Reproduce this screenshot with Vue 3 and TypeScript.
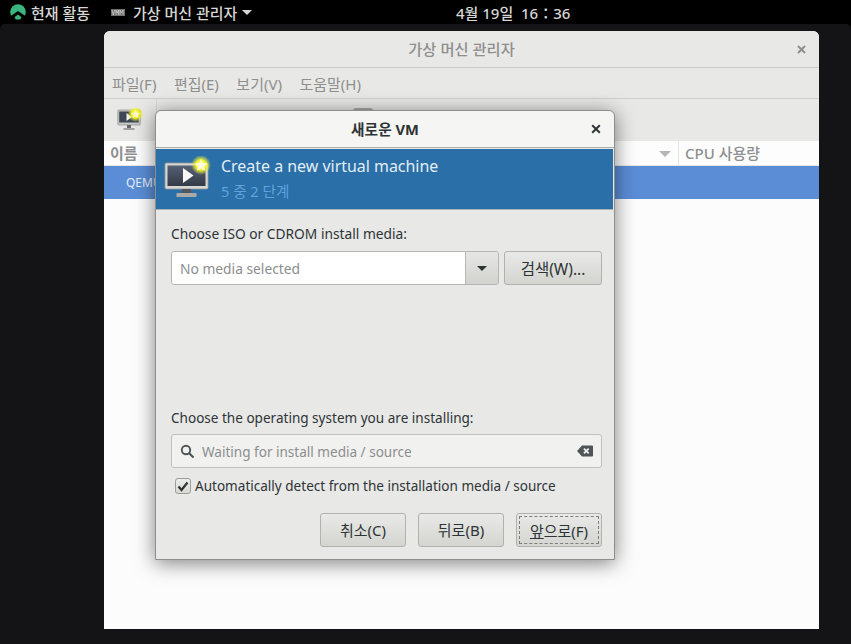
<script setup lang="ts">
const menus = ['파일(F)', '편집(E)', '보기(V)', '도움말(H)']
</script>

<template>
  <div class="desktop">
    <header class="topbar">
      <div class="activities">
        <svg class="logo" width="16" height="16" viewBox="0 0 16 16">
          <circle cx="8" cy="8" r="7.8" fill="#3bb57f" />
          <path d="M0 12.500 8 7l8 5.500V16H0z" fill="#000" />
          <path d="M4.500 13.200 8 10.400l3.500 2.800-1.300 2.300H5.800z" fill="#3bb57f" />
        </svg>
        <span>현재 활동</span>
      </div>
      <div class="appmenu">
        <svg class="vmm" width="14" height="7" viewBox="0 0 14 7">
          <rect width="14" height="7" fill="#6f6f6b" />
          <path d="M1 1l1.300 5L3.600 1M5 6V1l1.200 3L7.500 1v5M9 6V1l1.400 3L12 1v5" stroke="#cfcfcb" stroke-width="0.8" fill="none" />
        </svg>
        <span>가상 머신 관리자</span>
        <i class="caret"></i>
      </div>
      <div class="clock">4월 19일&nbsp; 16：36</div>
    </header>

    <main class="workspace">
      <section class="manager">
        <div class="mgr-title">
          <span>가상 머신 관리자</span>
          <svg class="mgr-close" width="9" height="9" viewBox="0 0 9 9">
            <path d="M1 1l7 7M8 1 1 8" stroke="#8e8e8c" stroke-width="2" />
          </svg>
        </div>
        <nav class="mgr-menu">
          <span v-for="m in menus" :key="m">{{ m }}</span>
        </nav>
        <div class="mgr-tools">
          <div class="tool-btn">
            <svg width="26" height="24" viewBox="0 0 26 24">
              <defs>
                <radialGradient id="glow-small">
                  <stop offset="0.5" stop-color="#f4f424" />
                  <stop offset="1" stop-color="#e8ee3e" stop-opacity="0" />
                </radialGradient>
              </defs>
              <rect x="0.800" y="2" width="22.500" height="15" rx="1" fill="#c9c9c6" stroke="#8c8c8a" stroke-width="0.7" />
              <rect x="2.200" y="3.500" width="19.500" height="11" fill="#3f4654" />
              <path d="M9.500 5v8l5.500-4z" fill="#f3f3f3" />
              <rect x="10" y="17" width="4" height="3" fill="#666" />
              <rect x="6.500" y="20" width="11" height="2" fill="#a2a29f" />
              <circle cx="18.500" cy="6" r="8" fill="url(#glow-small)" />
              <path d="M18.500 1.800l1.300 2.800 3 .4-2.200 2 .6 3-2.700-1.500-2.700 1.500.6-3-2.200-2 3-.4z" fill="#fbf8d2" />
            </svg>
          </div>
          <div class="tool-peek"></div>
        </div>
        <div class="mgr-head">
          <span class="col-name">이름</span>
          <svg class="sort" width="12" height="6" viewBox="0 0 12 6"><path d="M0 0h12L6 6z" fill="#b6b6b6" /></svg>
          <span class="col-cpu">CPU 사용량</span>
        </div>
        <div class="mgr-row">QEMU/KVM</div>
      </section>

      <section class="dialog">
        <div class="dlg-title">
          <span>새로운 VM</span>
          <svg class="dlg-close" width="10" height="10" viewBox="0 0 10 10">
            <path d="M1.200 1.200l7.600 7.600M8.800 1.200 1.200 8.800" stroke="#2e3436" stroke-width="2" />
          </svg>
        </div>
        <div class="banner">
          <svg class="banner-icon" width="48" height="42" viewBox="0 0 48 42">
            <defs>
              <radialGradient id="glow-big">
                <stop offset="0.5" stop-color="#f4f428" />
                <stop offset="1" stop-color="#e8ee3e" stop-opacity="0" />
              </radialGradient>
              <linearGradient id="screen" x1="0" y1="0" x2="0" y2="1">
                <stop offset="0" stop-color="#566074" />
                <stop offset="1" stop-color="#333a47" />
              </linearGradient>
            </defs>
            <rect x="1" y="7" width="43" height="26" rx="1.500" fill="#d6d6d3" stroke="#9a9a97" stroke-width="0.8" />
            <rect x="3.500" y="9.500" width="38" height="20.500" fill="url(#screen)" />
            <path d="M19 12v15l10.500-7.500z" fill="#f8f8f8" />
            <rect x="18" y="33" width="9" height="4" fill="#55565a" />
            <rect x="12.500" y="37" width="20" height="4" rx="0.500" fill="#a9a9a6" />
            <circle cx="37" cy="9" r="10" fill="url(#glow-big)" />
            <path d="M37 2.800l1.900 4 4.500.600-3.300 3 .9 4.400-4-2.200-4 2.200.9-4.400-3.300-3 4.500-.600z" fill="#fdfbd8" />
          </svg>
          <div class="banner-text">
            <div class="banner-title">Create a new virtual machine</div>
            <div class="banner-sub">5 중 2 단계</div>
          </div>
        </div>

        <div class="dlg-body">
          <div class="media">
            <label class="field-label">Choose ISO or CDROM install media:</label>
            <div class="media-row">
              <div class="combo">
                <div class="combo-input">No media selected</div>
                <div class="combo-btn"><i class="combo-caret"></i></div>
              </div>
              <button class="btn browse">검색(W)...</button>
            </div>
          </div>

          <div class="os">
            <label class="field-label">Choose the operating system you are installing:</label>
            <div class="search">
              <svg width="15" height="15" viewBox="0 0 15 15">
                <circle cx="6" cy="6" r="4.200" fill="none" stroke="#4f5557" stroke-width="1.900" />
                <path d="M9.200 9.200 13.500 13.500" stroke="#4f5557" stroke-width="2.200" />
              </svg>
              <span class="search-text">Waiting for install media / source</span>
              <svg class="clear" width="16" height="12" viewBox="0 0 16 12">
                <path fill-rule="evenodd" fill="#4f5557" d="M5 0.500h10a1 1 0 0 1 1 1v9a1 1 0 0 1-1 1H5L0 6zM7.500 3 6.300 4.200 8.100 6 6.300 7.800 7.500 9l1.800-1.800L11.100 9l1.200-1.200L10.500 6l1.800-1.800L11.100 3 9.300 4.800z" />
              </svg>
            </div>
            <div class="auto">
              <span class="check">
                <svg width="12" height="11" viewBox="0 0 12 11"><path d="M1.500 5.500 4.500 9 10.500 1.500" fill="none" stroke="#2e3436" stroke-width="2.200" /></svg>
              </span>
              <span>Automatically detect from the installation media / source</span>
            </div>
          </div>

          <div class="actions">
            <button class="btn action">취소(C)</button>
            <button class="btn action">뒤로(B)</button>
            <button class="btn action focused"><span class="focus-ring"><u>앞</u>으로(F)</span></button>
          </div>
        </div>
      </section>
    </main>
  </div>
</template>

<style>
html, body {
  margin: 0;
  background: #000;
}
</style>

<style scoped>
.desktop {
  display: flex;
  flex-direction: column;
  width: 851px;
  height: 644px;
  overflow: hidden;
  background: #000;
  font-family: "Noto Sans", "Noto Sans CJK KR", sans-serif;
  font-size: 13.55px;
  color: #2e3436;
}

.topbar {
  display: grid;
  flex: none;
  grid-template-columns: 111px 345px 1fr;
  align-items: center;
  height: 24px;
  color: #d6d6d4;
  font-weight: 500;
  font-size: 15px;
  white-space: nowrap;
}
.activities {
  display: flex;
  align-items: center;
  gap: 5px;
  padding-left: 10px;
}
.appmenu {
  display: flex;
  align-items: center;
}
.vmm {
  margin-right: 8px;
}
.caret {
  width: 0;
  height: 0;
  margin-left: 5px;
  border-left: 5px solid transparent;
  border-right: 5px solid transparent;
  border-top: 5px solid #d6d6d4;
}

.workspace {
  position: relative;
  flex: 1;
  border-radius: 5px 5px 0 0;
  background: #141416;
}

.manager {
  position: absolute;
  left: 104px;
  top: 7px;
  width: 715px;
  height: 598px;
  border-radius: 6px 6px 0 0;
  background: #fcfcfc;
  overflow: hidden;
  color: #8f9091;
}
.mgr-title {
  position: relative;
  display: flex;
  align-items: center;
  justify-content: center;
  box-sizing: border-box;
  height: 37px;
  padding-bottom: 2px;
  background: #e8e8e7;
  border-bottom: 1px solid #c8c8c5;
  font-weight: 500;
  font-size: 15.3px;
  color: #8f8f8d;
}
.mgr-close {
  position: absolute;
  right: 13px;
  top: 14px;
}
.mgr-menu {
  display: flex;
  gap: 17.5px;
  align-items: center;
  height: 30px;
  padding-left: 8px;
  background: #e8e8e7;
  border-bottom: 1px solid #d0d0cd;
  font-size: 15px;
  color: #8f8f8d;
}
.mgr-tools {
  display: flex;
  height: 42px;
  background: #e8e8e7;
}
.tool-btn {
  display: flex;
  justify-content: center;
  flex: none;
  box-sizing: border-box;
  width: 53px;
  padding-top: 9px;
  border-right: 1px solid #d8d8d5;
}
.tool-peek {
  width: 20px;
  height: 3px;
  margin: 9px 0 0 196px;
  border-radius: 3px 3px 0 0;
  background: #a9a9a7;
}
.mgr-head {
  position: relative;
  height: 24px;
  line-height: 24px;
  background: #fdfdfd;
  border-bottom: 1px solid #e6e6e4;
  font-weight: 500;
  font-size: 15px;
  color: #8e8f90;
}
.col-name {
  position: absolute;
  left: 6px;
  font-weight: 700;
}
.sort {
  position: absolute;
  left: 555px;
  top: 10px;
}
.col-cpu {
  position: absolute;
  left: 574px;
  padding-left: 6px;
  border-left: 1px solid #e6e6e4;
}
.mgr-row {
  height: 33px;
  line-height: 33px;
  padding-left: 22px;
  background: #5b8dd6;
  color: #e6eefa;
  font-size: 12px;
}

.dialog {
  position: absolute;
  left: 155px;
  top: 86px;
  display: flex;
  flex-direction: column;
  width: 458px;
  height: 448px;
  border: 1px solid #8e8e8b;
  border-radius: 6px 6px 0 0;
  background: #e8e8e7;
  box-shadow: 0 3px 20px rgba(0, 0, 0, 0.5);
}
.dlg-title {
  position: relative;
  display: flex;
  align-items: center;
  justify-content: center;
  flex: none;
  height: 35px;
  padding-bottom: 1px;
  border-radius: 6px 6px 0 0;
  background: #f5f5f4;
  border-bottom: 1px solid #aeaeab;
  font-weight: 700;
  font-size: 14.7px;
}
.dlg-close {
  position: absolute;
  right: 13px;
  top: 13px;
}
.banner {
  display: flex;
  flex: none;
  box-sizing: border-box;
  height: 61px;
  margin: 1px 1px 0 0;
  background: #2a6fa7;
  border-bottom: 1px solid #a9b2b8;
}
.banner-icon {
  margin: 7px 0 0 8px;
}
.banner-text {
  padding-left: 9px;
}
.banner-title {
  margin-top: 5px;
  font-size: 15.95px;
  line-height: 24px;
  color: #e3edf5;
}
.banner-sub {
  margin-top: 3px;
  font-size: 14.6px;
  line-height: 20px;
  color: #5fa3da;
}
.dlg-body {
  display: flex;
  flex: 1;
  flex-direction: column;
  padding: 0 12px 0 15px;
}
.field-label {
  display: block;
  line-height: 20px;
  color: #2e3436;
}
.media {
  margin-top: 14px;
}
.media .field-label {
  font-size: 13.75px;
}
.media-row {
  display: flex;
  gap: 5px;
  margin-top: 7px;
}
.combo {
  display: flex;
  box-sizing: border-box;
  width: 328px;
  height: 34px;
  border: 1px solid #b6b6b3;
  border-radius: 3px;
  overflow: hidden;
}
.combo-input {
  flex: 1;
  padding-left: 8px;
  background: #fff;
  font-size: 13.8px;
  line-height: 34px;
  color: #8c8e8f;
}
.combo-btn {
  display: flex;
  align-items: center;
  justify-content: center;
  width: 32px;
  border-left: 1px solid #b6b6b3;
  background: linear-gradient(#e6e6e4, #d2d2cf);
}
.combo-caret {
  width: 0;
  height: 0;
  border-left: 5px solid transparent;
  border-right: 5px solid transparent;
  border-top: 5px solid #2e3436;
}
.btn {
  box-sizing: border-box;
  height: 34px;
  padding: 0;
  border: 1px solid #b1b1ae;
  border-radius: 3px;
  background: linear-gradient(#e9e9e7, #d4d4d1);
  color: #2e3436;
  font-family: inherit;
  font-size: 15px;
}
.browse {
  width: 98px;
  font-size: 15.5px;
}
.os {
  margin-top: 123px;
}
.search {
  display: flex;
  align-items: center;
  box-sizing: border-box;
  height: 34px;
  margin-top: 6px;
  padding: 0 8px;
  border: 1px solid #c0c0bd;
  border-radius: 3px;
  background: #f1f1f0;
}
.search-text {
  flex: 1;
  margin-left: 7px;
  padding-top: 2px;
  color: #8c8e8f;
}
.auto {
  display: flex;
  align-items: center;
  gap: 4px;
  height: 20px;
  margin: 8px 0 0 4px;
}
.check {
  display: flex;
  align-items: center;
  justify-content: center;
  box-sizing: border-box;
  width: 16px;
  height: 16px;
  border: 1px solid #9d9d9a;
  border-radius: 3px;
  background: linear-gradient(#ececea, #d8d8d5);
}
.actions {
  display: flex;
  justify-content: flex-end;
  gap: 12px;
  margin-top: 17px;
}
.action {
  width: 86px;
  padding-bottom: 1px;
}
.focused {
  padding: 2px;
}
.focus-ring {
  display: flex;
  align-items: center;
  justify-content: center;
  box-sizing: border-box;
  height: 100%;
  border: 1px dashed #7d7d7a;
}
</style>
